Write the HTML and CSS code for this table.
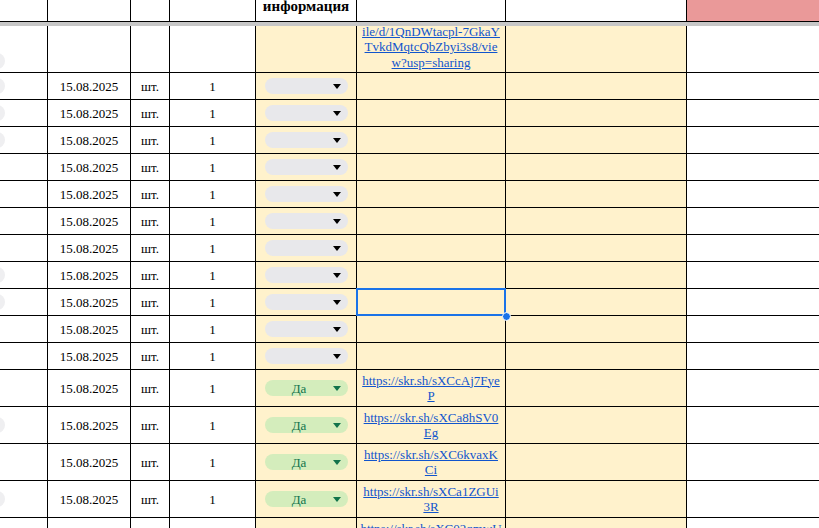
FILE: index.html
```html
<!DOCTYPE html>
<html lang="ru">
<head>
<meta charset="utf-8">
<title>Sheet</title>
<link rel="stylesheet" href="styles.css">
</head>
<body>
<div class="sheet">
  <div class="grid hdr">
    <div class="c"></div>
    <div class="c"></div>
    <div class="c"></div>
    <div class="c"></div>
    <div class="c hcell"><span class="htxt">информация</span></div>
    <div class="c"></div>
    <div class="c"></div>
    <div class="c pink"></div>
  </div>
  <div class="freeze"></div>
  <div class="grid rows">
    <!-- row 1 -->
    <div class="c a"><span class="lchip low"></span></div>
    <div class="c"></div><div class="c"></div><div class="c"></div>
    <div class="c y"></div>
    <div class="c y link first"><a href="#">ile/d/1QnDWtacpl-7GkaY<br>TvkdMqtcQbZbyi3s8/vie<br>w?usp=sharing</a></div>
    <div class="c y"></div><div class="c"></div>
    <!-- row 2 -->
    <div class="c a"><span class="lchip"></span></div>
    <div class="c m">15.08.2025</div><div class="c m">шт.</div><div class="c m">1</div>
    <div class="c y dd"><span class="chip"><span class="ct"></span><span class="arr"></span></span></div>
    <div class="c y"></div><div class="c y"></div><div class="c"></div>
    <!-- row 3 -->
    <div class="c a"><span class="lchip"></span></div>
    <div class="c m">15.08.2025</div><div class="c m">шт.</div><div class="c m">1</div>
    <div class="c y dd"><span class="chip"><span class="ct"></span><span class="arr"></span></span></div>
    <div class="c y"></div><div class="c y"></div><div class="c"></div>
    <!-- row 4 -->
    <div class="c a"><span class="lchip"></span></div>
    <div class="c m">15.08.2025</div><div class="c m">шт.</div><div class="c m">1</div>
    <div class="c y dd"><span class="chip"><span class="ct"></span><span class="arr"></span></span></div>
    <div class="c y"></div><div class="c y"></div><div class="c"></div>
    <!-- row 5 -->
    <div class="c a"></div>
    <div class="c m">15.08.2025</div><div class="c m">шт.</div><div class="c m">1</div>
    <div class="c y dd"><span class="chip"><span class="ct"></span><span class="arr"></span></span></div>
    <div class="c y"></div><div class="c y"></div><div class="c"></div>
    <!-- row 6 -->
    <div class="c a"></div>
    <div class="c m">15.08.2025</div><div class="c m">шт.</div><div class="c m">1</div>
    <div class="c y dd"><span class="chip"><span class="ct"></span><span class="arr"></span></span></div>
    <div class="c y"></div><div class="c y"></div><div class="c"></div>
    <!-- row 7 -->
    <div class="c a"></div>
    <div class="c m">15.08.2025</div><div class="c m">шт.</div><div class="c m">1</div>
    <div class="c y dd"><span class="chip"><span class="ct"></span><span class="arr"></span></span></div>
    <div class="c y"></div><div class="c y"></div><div class="c"></div>
    <!-- row 8 -->
    <div class="c a"></div>
    <div class="c m">15.08.2025</div><div class="c m">шт.</div><div class="c m">1</div>
    <div class="c y dd"><span class="chip"><span class="ct"></span><span class="arr"></span></span></div>
    <div class="c y"></div><div class="c y"></div><div class="c"></div>
    <!-- row 9 -->
    <div class="c a"><span class="lchip"></span></div>
    <div class="c m">15.08.2025</div><div class="c m">шт.</div><div class="c m">1</div>
    <div class="c y dd"><span class="chip"><span class="ct"></span><span class="arr"></span></span></div>
    <div class="c y"></div><div class="c y"></div><div class="c"></div>
    <!-- row 10 -->
    <div class="c a"><span class="lchip"></span></div>
    <div class="c m">15.08.2025</div><div class="c m">шт.</div><div class="c m">1</div>
    <div class="c y dd"><span class="chip"><span class="ct"></span><span class="arr"></span></span></div>
    <div class="c y sel"><span class="selbox"></span><span class="handle"></span></div>
    <div class="c y"></div><div class="c"></div>
    <!-- row 11 -->
    <div class="c a"></div>
    <div class="c m">15.08.2025</div><div class="c m">шт.</div><div class="c m">1</div>
    <div class="c y dd"><span class="chip"><span class="ct"></span><span class="arr"></span></span></div>
    <div class="c y"></div><div class="c y"></div><div class="c"></div>
    <!-- row 12 -->
    <div class="c a"></div>
    <div class="c m">15.08.2025</div><div class="c m">шт.</div><div class="c m">1</div>
    <div class="c y dd"><span class="chip"><span class="ct"></span><span class="arr"></span></span></div>
    <div class="c y"></div><div class="c y"></div><div class="c"></div>
    <!-- row 13 -->
    <div class="c a"></div>
    <div class="c m">15.08.2025</div><div class="c m">шт.</div><div class="c m">1</div>
    <div class="c y dd"><span class="chip yes"><span class="ct">Да</span><span class="arr"></span></span></div>
    <div class="c y link"><a href="#">https://skr.sh/sXCcAj7Fye<br>P</a></div>
    <div class="c y"></div><div class="c"></div>
    <!-- row 14 -->
    <div class="c a"><span class="lchip"></span></div>
    <div class="c m">15.08.2025</div><div class="c m">шт.</div><div class="c m">1</div>
    <div class="c y dd"><span class="chip yes"><span class="ct">Да</span><span class="arr"></span></span></div>
    <div class="c y link"><a href="#">https://skr.sh/sXCa8hSV0<br>Eg</a></div>
    <div class="c y"></div><div class="c"></div>
    <!-- row 15 -->
    <div class="c a"></div>
    <div class="c m">15.08.2025</div><div class="c m">шт.</div><div class="c m">1</div>
    <div class="c y dd"><span class="chip yes"><span class="ct">Да</span><span class="arr"></span></span></div>
    <div class="c y link"><a href="#">https://skr.sh/sXC6kvaxK<br>Ci</a></div>
    <div class="c y"></div><div class="c"></div>
    <!-- row 16 -->
    <div class="c a"><span class="lchip"></span></div>
    <div class="c m">15.08.2025</div><div class="c m">шт.</div><div class="c m">1</div>
    <div class="c y dd"><span class="chip yes"><span class="ct">Да</span><span class="arr"></span></span></div>
    <div class="c y link"><a href="#">https://skr.sh/sXCa1ZGUi<br>3R</a></div>
    <div class="c y"></div><div class="c"></div>
    <!-- row 17 -->
    <div class="c a"></div>
    <div class="c m">15.08.2025</div><div class="c m">шт.</div><div class="c m">1</div>
    <div class="c y dd"><span class="chip yes"><span class="ct">Да</span><span class="arr"></span></span></div>
    <div class="c y link"><a href="#">https://skr.sh/sXC02qmwU<br>x</a></div>
    <div class="c y"></div><div class="c"></div>
  </div>
</div>
</body>
</html>
```
FILE: styles.css
```css
html, body {
  margin: 0;
  padding: 0;
  background: #fff;
  overflow: hidden;
}
body {
  font-family: "Liberation Serif", "Times New Roman", serif;
  font-size: 13px;
  color: #000;
}
.sheet {
  width: 819px;
  height: 528px;
  overflow: hidden;
}
.grid {
  display: grid;
  grid-template-columns: 47px 82px 38px 85px 100px 148px 180px 1fr;
  column-gap: 1px;
  row-gap: 1px;
  background: #000;
}
.hdr {
  grid-template-rows: 21px;
}
.rows {
  grid-template-rows: 46px repeat(11, 26px) repeat(5, 36px);
}
.freeze {
  height: 4px;
  border-top: 1px solid #000;
  background: #c7c7c7;
}
.c {
  background: #fff;
  overflow: hidden;
  min-width: 0;
}
.y { background: #fff2cc; }
.pink { background: #ea9999; }
.hcell {
  text-align: center;
}
.htxt {
  display: block;
  font-weight: bold;
  font-size: 15px;
  line-height: 12px;
}
.m {
  display: flex;
  align-items: center;
  justify-content: center;
  padding-top: 2px;
  white-space: nowrap;
}
.a {
  display: flex;
  align-items: center;
}
.lchip {
  display: block;
  width: 16px;
  height: 16px;
  margin-left: -11px;
  border-radius: 8px;
  background: #efeff1;
}
.lchip.low {
  align-self: flex-end;
  margin-bottom: 3px;
}
.dd {
  display: flex;
  align-items: center;
  padding: 0 8px 0 9px;
}
.chip {
  display: flex;
  align-items: center;
  width: 100%;
  height: 16px;
  border-radius: 8px;
  background: #e8e8eb;
}
.ct {
  flex: 1;
  text-align: center;
  line-height: 16px;
  padding-top: 1px;
}
.arr {
  width: 0;
  height: 0;
  margin-right: 7px;
  margin-top: 1px;
  border-left: 4px solid transparent;
  border-right: 4px solid transparent;
  border-top: 5px solid #000;
}
.chip.yes {
  background: #d4edbc;
  color: #11734b;
}
.chip.yes .arr {
  border-top-color: #11734b;
}
.link {
  display: flex;
  align-items: center;
  justify-content: center;
  text-align: center;
  line-height: 15.5px;
}
.link.first {
  align-items: flex-end;
  padding-bottom: 2px;
}
.link a {
  color: #1155cc;
  text-decoration: underline;
  white-space: nowrap;
}
.sel {
  position: relative;
  overflow: visible;
  z-index: 2;
}
.selbox {
  position: absolute;
  left: -1px;
  top: -1px;
  right: -1px;
  bottom: -1px;
  border: 2px solid #1a73e8;
}
.handle {
  position: absolute;
  right: -6px;
  bottom: -6px;
  width: 7px;
  height: 7px;
  border-radius: 50%;
  background: #1a73e8;
  border: 1px solid #fff;
}
```
